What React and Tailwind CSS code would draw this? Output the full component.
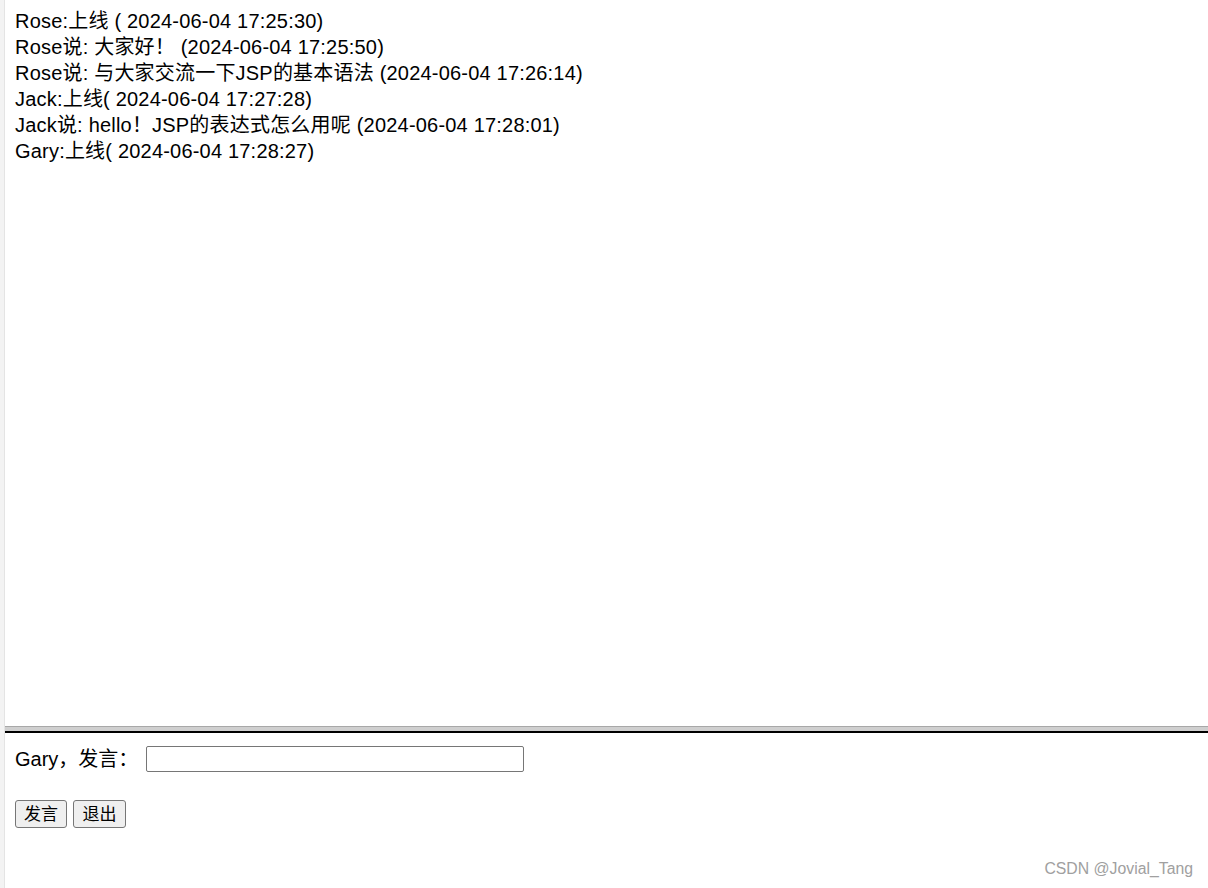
import React from "react";

const messages = [
  "Rose:上线 ( 2024-06-04 17:25:30)",
  "Rose说: 大家好！ (2024-06-04 17:25:50)",
  "Rose说: 与大家交流一下JSP的基本语法 (2024-06-04 17:26:14)",
  "Jack:上线( 2024-06-04 17:27:28)",
  "Jack说: hello！JSP的表达式怎么用呢 (2024-06-04 17:28:01)",
  "Gary:上线( 2024-06-04 17:28:27)",
];

const font = { fontFamily: '"Liberation Sans", "Noto Sans CJK SC", sans-serif' };

export default function App() {
  return (
    <div className="flex h-[888px] w-[1208px] overflow-hidden bg-white text-black" style={font}>
      {/* window edge */}
      <div className="w-[5px] shrink-0 bg-[#f3f3f3] border-r border-[#e4e4e4]" />

      <div className="flex flex-1 flex-col">
        {/* messages frame */}
        <div className="h-[726px] rounded-tl-[6px] px-[10px] pt-[8px] text-[20px] leading-[26px] tracking-[0.2px]">
          {messages.map((m, i) => (
            <div key={i} className="whitespace-pre">
              {m}
            </div>
          ))}
        </div>

        {/* frame border */}
        <div className="h-[5px] border-t border-[#a8a8a8] bg-[#cfcfcf]" />
        <div className="h-[2px] bg-black" />

        {/* input frame */}
        <div className="relative flex-1 px-[10px] pt-[13px]">
          <div className="flex items-center text-[20px] leading-[26px]">
            <span>Gary，发言：</span>
            <input
              type="text"
              className="ml-[8px] h-[26px] w-[378px] rounded-[2px] border border-[#767676] bg-white px-1 outline-none"
            />
          </div>

          <div className="mt-[28px] flex gap-[6px]">
            <button className="h-[28px] w-[52px] rounded-[3px] border border-[#767676] bg-[#efefef] text-[17px] leading-none">
              发言
            </button>
            <button className="h-[28px] w-[53px] rounded-[3px] border border-[#767676] bg-[#efefef] text-[17px] leading-none">
              退出
            </button>
          </div>

          <div
            className="absolute bottom-[7px] right-[15px] text-[15.8px] text-[#a0a0a0]"
            style={{ fontFamily: '"Liberation Sans", Arial, sans-serif' }}
          >
            CSDN @Jovial_Tang
          </div>
        </div>
      </div>
    </div>
  );
}
